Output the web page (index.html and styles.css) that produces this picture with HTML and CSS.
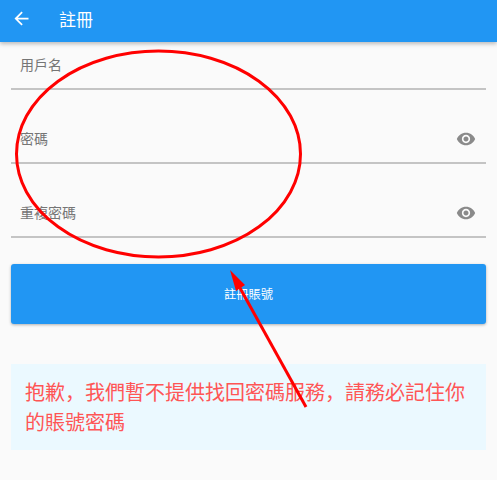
FILE: index.html
```html
<!DOCTYPE html>
<html lang="zh-CN">
<head>
<meta charset="utf-8">
<title>註冊</title>
<link rel="stylesheet" href="styles.css">
</head>
<body>
<header class="appbar">
  <svg class="back" viewBox="0 0 24 24" width="21" height="21"><path d="M20 11H7.83l5.59-5.59L12 4l-8 8 8 8 1.41-1.41L7.83 13H20v-2z"/></svg>
  <h1 class="title">註冊</h1>
</header>
<main class="content">
  <div class="field first"><span class="label">用戶名</span></div>
  <div class="field"><span class="label">密碼</span>
    <svg class="eye" viewBox="0 0 24 24" width="20" height="20"><path d="M12 4.5C7 4.5 2.73 7.61 1 12c1.73 4.39 6 7.5 11 7.5s9.27-3.11 11-7.5c-1.73-4.39-6-7.5-11-7.5zM12 17c-2.76 0-5-2.24-5-5s2.24-5 5-5 5 2.24 5 5-2.24 5-5 5zm0-8c-1.66 0-3 1.34-3 3s1.34 3 3 3 3-1.34 3-3-1.34-3-3-3z"/></svg>
  </div>
  <div class="field"><span class="label">重複密碼</span>
    <svg class="eye" viewBox="0 0 24 24" width="20" height="20"><path d="M12 4.5C7 4.5 2.73 7.61 1 12c1.73 4.39 6 7.5 11 7.5s9.27-3.11 11-7.5c-1.73-4.39-6-7.5-11-7.5zM12 17c-2.76 0-5-2.24-5-5s2.24-5 5-5 5 2.24 5 5-2.24 5-5 5zm0-8c-1.66 0-3 1.34-3 3s1.34 3 3 3 3-1.34 3-3-1.34-3-3-3z"/></svg>
  </div>
  <button class="submit" type="button">註冊賬號</button>
  <p class="notice">抱歉&#xFF0C;我們暫不提供找回密碼服務&#xFF0C;請務必記住你的賬號密碼</p>
</main>
<svg class="markup" viewBox="0 0 497 480" width="497" height="480">
  <ellipse cx="158.5" cy="154" rx="142" ry="103" fill="none" stroke="#f00" stroke-width="3"/>
  <line x1="306" y1="407" x2="240" y2="288" stroke="#f00" stroke-width="3"/>
  <polygon points="230,270 245,285 236,291" fill="#f00"/>
</svg>
</body>
</html>
```
FILE: styles.css
```css
* { box-sizing: border-box; }
html, body { margin: 0; padding: 0; }
body {
  width: 497px;
  height: 480px;
  overflow: hidden;
  position: relative;
  background: #fafafa;
  font-family: "Roboto", "Noto Sans CJK SC", sans-serif;
}
.appbar {
  height: 42px;
  background: #2196f3;
  display: flex;
  align-items: center;
  padding: 0 0 5px 11px;
  box-shadow: 0 2px 4px rgba(0, 0, 0, .25);
  position: relative;
}
.back { fill: #fff; flex: none; }
.title {
  margin: 0 0 0 27px;
  font-size: 17px;
  font-weight: 400;
  color: #fff;
}
.content {
  padding: 0 11px;
  display: flex;
  flex-direction: column;
}
.field {
  height: 74px;
  border-bottom: 2px solid #c4c4c4;
  display: flex;
  align-items: center;
  justify-content: space-between;
  padding: 24px 10px 0 9px;
  color: #757575;
  font-size: 14px;
}
.field.first {
  height: 48px;
  padding-top: 0;
  padding-bottom: 2px;
}
.label { margin-top: -1px; }
.eye { fill: #8a8a8a; flex: none; margin-top: 2px; }
.submit {
  margin-top: 26px;
  height: 60px;
  border: 0;
  border-radius: 3px;
  background: #2196f3;
  color: #fff;
  font: inherit;
  font-size: 12.25px;
  box-shadow: 0 1px 3px rgba(0, 0, 0, .3);
}
.notice {
  margin: 40px 0 0;
  height: 86px;
  padding: 14px;
  background: #ebf9ff;
  color: #f55;
  font-size: 20px;
  line-height: 30px;
}
.markup {
  position: absolute;
  left: 0;
  top: 0;
  pointer-events: none;
}
```
